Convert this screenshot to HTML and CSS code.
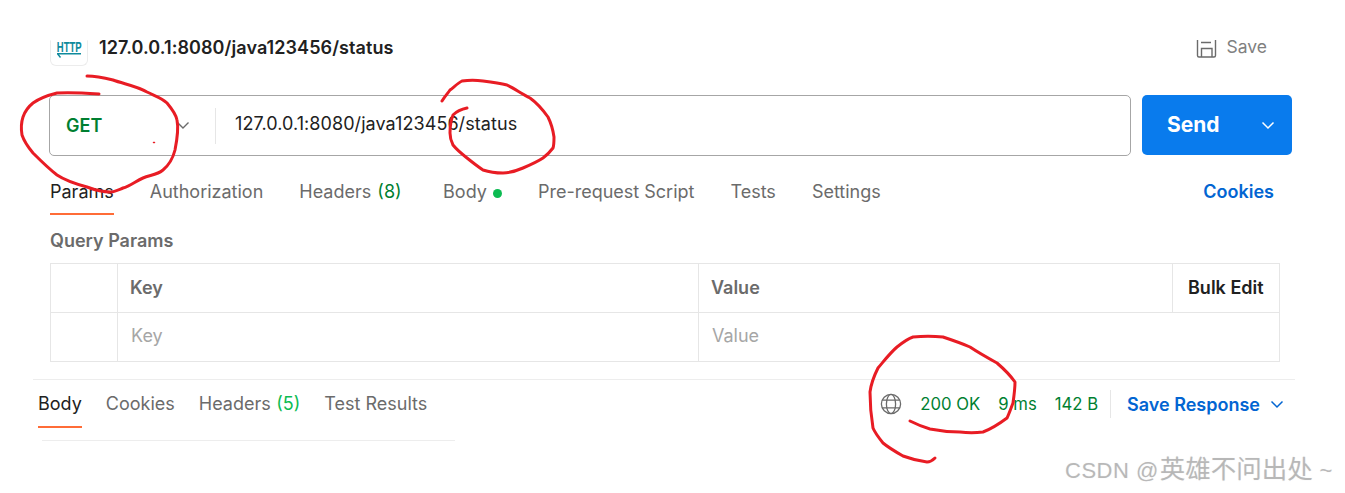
FILE: index.html
```html
<!DOCTYPE html>
<html lang="en">
<head>
<meta charset="utf-8">
<title>Postman request</title>
<link rel="stylesheet" href="styles.css">
</head>
<body>
<div class="page">
  <header class="head">
    <div class="head-left">
      <div class="http-icon"><span class="http-word">HTTP</span><svg class="http-arrow" width="26" height="5" viewBox="0 0 26 5"><path d="M1 .8H25M1.5 .8L4.5 4.5" fill="none" stroke="#0f8a9c" stroke-width="1.4"/></svg></div>
      <div class="title">127.0.0.1:8080/java123456/status</div>
    </div>
    <div class="save">
      <svg class="save-icon" width="21" height="18" viewBox="0 0 21 18"><path d="M1.5 0V15.5Q1.5 17 3 17H18Q19.5 17 19.5 15.5V0M5 2.5H15M5.5 17V8.5H16V17" fill="none" stroke="#6b6b6b" stroke-width="1.4"/></svg>
      <span>Save</span>
    </div>
  </header>

  <div class="bar">
    <div class="url-box">
      <div class="method"><span class="method-name">GET</span><svg class="chev" width="14" height="9" viewBox="0 0 14 9"><path d="M1.5 1.5L7 7L12.5 1.5" fill="none" stroke="#6b6b6b" stroke-width="1.4"/></svg></div>
      <div class="url">127.0.0.1:8080/java123456/status</div>
    </div>
    <div class="send"><span class="send-label">Send</span><svg width="14" height="9" viewBox="0 0 14 9"><path d="M1.5 1.5L7 7L12.5 1.5" fill="none" stroke="#fff" stroke-width="1.5"/></svg></div>
  </div>

  <nav class="req-tabs">
    <span class="tab tab-active">Params</span>
    <span class="tab">Authorization</span>
    <span class="tab">Headers <i class="count">(8)</i></span>
    <span class="tab tab-body">Body <b class="dot"></b></span>
    <span class="tab">Pre-request Script</span>
    <span class="tab">Tests</span>
    <span class="tab">Settings</span>
    <span class="cookies">Cookies</span>
  </nav>

  <div class="qp-label">Query Params</div>
  <div class="qp-table">
    <div class="cell"></div>
    <div class="cell cell-h">Key</div>
    <div class="cell cell-h">Value</div>
    <div class="cell cell-bulk">Bulk Edit</div>
    <div class="cell"></div>
    <div class="cell cell-ph">Key</div>
    <div class="cell cell-ph cell-wide">Value</div>
  </div>

  <section class="resp">
    <nav class="resp-tabs">
      <span class="rtab rtab-active">Body</span>
      <span class="rtab">Cookies</span>
      <span class="rtab">Headers <i class="count2">(5)</i></span>
      <span class="rtab">Test Results</span>
    </nav>
    <div class="resp-meta">
      <svg class="globe" width="22" height="22" viewBox="0 0 22 22" fill="none" stroke="#6b6b6b" stroke-width="1.3"><circle cx="11" cy="11" r="9.6"/><ellipse cx="11" cy="11" rx="4.6" ry="9.6"/><path d="M2.4 7.2H19.6M2.4 14.8H19.6"/></svg>
      <span class="stat stat-ok">200 OK</span>
      <span class="stat stat-ms">9 ms</span>
      <span class="stat stat-size">142 B</span>
      <span class="sep"></span>
      <span class="save-resp">Save Response</span>
      <svg width="14" height="9" viewBox="0 0 14 9"><path d="M1.5 1.5L7 7L12.5 1.5" fill="none" stroke="#0265d2" stroke-width="1.5"/></svg>
    </div>
  </section>
  <div class="resp-rule"></div>

  <svg class="ink" width="1345" height="493" viewBox="0 0 1345 493" fill="none" stroke="#e81c24" stroke-width="3" stroke-linecap="round" stroke-linejoin="round">
    <path d="M87 76C96 76 105 78 113 80C124 84 137 86 147 92C155 96 162 98 167 103C172 109 176 114 177 120C179 130 177 140 175 150C173 158 169 165 163 170C157 175 150 175 143 178C136 181 130 186 123 188C118 190 114 192 110 192C102 192 95 190 87 187C76 184 66 181 57 175C48 168 40 160 33 153C28 147 24 141 22 135C21 129 21 123 23 117C25 111 28 107 33 103C40 98 49 95 57 93C70 92 85 93 99 94"/>
    <path d="M442 101C445 96 448 93 450 90C454 87 458 83 462 81C469 80 476 80 483 81C491 82 499 83 507 85C515 89 522 94 530 98C537 103 543 110 548 117C551 123 553 130 554 137C554 141 554 145 553 148C550 152 547 155 543 158C537 162 530 165 523 168C516 171 510 173 503 173C496 173 489 172 483 170C477 166 472 162 467 158C462 154 457 150 453 145C451 141 450 137 450 133C450 127 451 120 453 115C457 111 462 109 467 108"/>
    <path d="M935 458C932 461 930 462 927 462C919 461 911 459 903 456C896 452 889 448 883 443C879 438 875 433 873 428C871 416 870 404 870 392C871 384 874 376 878 368C884 361 890 353 897 347C902 343 907 339 913 337C923 336 933 336 943 337C952 340 961 343 970 347C979 353 988 358 997 363C1004 369 1010 375 1015 382C1015 389 1014 396 1013 403C1011 408 1009 414 1007 418C999 424 991 429 983 432C975 433 968 433 960 432C950 432 940 431 930 429C923 427 916 424 910 421"/>
    <path class="ink-dot" d="M153.5 142.5H154.5"/>
  </svg>
  <div class="mark">CSDN @<span class="mark-zh">英雄不问出处</span> ~</div>
</div>
</body>
</html>
```
FILE: styles.css
```css
* { box-sizing: border-box; }
html, body { margin: 0; padding: 0; background: #fff; }
.page {
  position: relative;
  width: 1345px;
  height: 493px;
  overflow: hidden;
  font-family: Inter, "Liberation Sans", sans-serif;
  font-size: 18px;
  color: #6b6b6b;
}
.head {
  height: 66px;
  padding: 28px 78px 0 50px;
  display: flex;
  justify-content: space-between;
}
.head-left { display: flex; gap: 11px; align-items: flex-start; }
.http-icon {
  width: 38px;
  height: 26px;
  margin-top: 12px;
  overflow: hidden;
  border-radius: 0 0 6px 6px;
  border: 1px solid #ececec;
  border-top-color: #fff;
  display: flex;
  flex-direction: column;
  align-items: center;
  justify-content: flex-end;
  padding-bottom: 7px;
  flex: none;
}
.http-word {
  font-family: "Liberation Sans", sans-serif;
  font-size: 14px;
  font-weight: 700;
  line-height: 12px;
  color: #0f8a9c;
  transform: scaleX(0.68);
}
.http-arrow { display: block; flex: none; }
.title { font-size: 18px; letter-spacing: 0.08px; font-weight: 600; color: #212121; line-height: 39px; }
.save { display: flex; gap: 10px; line-height: 38px; font-size: 17.5px; color: #808080; }
.save-icon { margin-top: 12px; }
.bar {
  margin-top: 29px;
  padding: 0 53px 0 49px;
  display: flex;
  gap: 11px;
}
.url-box {
  flex: 1;
  height: 61px;
  border: 1px solid #a6a6a6;
  border-radius: 5px;
  display: flex;
  align-items: center;
}
.method {
  width: 166px;
  height: 36px;
  padding: 0 25px 0 16px;
  display: flex;
  align-items: center;
  justify-content: space-between;
  border-right: 1px solid #e6e6e6;
}
.method-name { font-size: 18px; font-weight: 600; color: #007f31; }
.url { padding-left: 19px; margin-bottom: 4px; color: #212121; font-size: 18px; letter-spacing: 0.07px; }
.send {
  width: 150px;
  height: 60px;
  background: #097bed;
  border-radius: 5px;
  color: #fff;
  display: flex;
  align-items: center;
  justify-content: space-between;
  padding: 0 17px 0 25px;
}
.send-label { font-size: 21px; font-weight: 700; margin-bottom: 2px; }
.req-tabs {
  margin-top: 13px;
  padding: 0 71px 0 50px;
  height: 46px;
  display: flex;
  align-items: flex-start;
}
.tab {
  line-height: 45px;
  height: 46px;
  margin-right: 36px;
  white-space: nowrap;
}
.tab-active { color: #212121; border-bottom: 2px solid #ff6c37; }
.tab-body { margin-left: 5.5px; }
.count { font-style: normal; color: #007f31; margin-left: 1px; }
.dot { display: inline-block; width: 9px; height: 9px; border-radius: 50%; background: #0cbb52; margin-left: 1px; }
.cookies { margin-left: auto; line-height: 45px; font-weight: 600; color: #0265d2; }
.qp-label { margin-top: 11px; padding-left: 50px; line-height: 30px; font-weight: 600; }
.qp-table {
  margin: 7px 65px 0 50px;
  display: grid;
  grid-template-columns: 67px 581px 474px 1fr;
  grid-auto-rows: 49px;
  height: 99px;
  border: 1px solid #e6e6e6;
}
.cell {
  border-right: 1px solid #e6e6e6;
  padding-left: 12px;
  line-height: 48px;
}
.qp-table .cell:nth-child(-n+4) { border-bottom: 1px solid #e6e6e6; }
.cell-h { font-weight: 600; }
.cell-bulk { border-right: 0; padding-left: 15px; font-weight: 600; color: #212121; }
.cell-ph { color: #a6a6a6; padding-left: 13px; line-height: 46px; }
.cell-wide { grid-column: span 2; border-right: 0; }
.resp {
  margin: 17px 50px 0 33px;
  height: 49px;
  border-top: 1px solid #ededed;
  display: flex;
  justify-content: space-between;
  padding: 0 11px 0 5px;
}
.resp-tabs { display: flex; gap: 24px; }
.rtab { line-height: 47px; height: 48px; white-space: nowrap; }
.rtab-active { color: #212121; border-bottom: 2px solid #ff6c37; }
.count2 { font-style: normal; color: #0cbb52; margin-left: 0.5px; }
.resp-meta { display: flex; align-items: center; height: 48px; }
.globe { margin-right: 18px; }
.stat { font-size: 16.7px; color: #007f31; }
.stat-ok { margin-right: 18px; }
.stat-ms { margin-right: 18px; }
.stat-size { margin-right: 12px; }
.sep { width: 1px; height: 28px; background: #e6e6e6; margin-right: 16px; }
.save-resp { font-weight: 600; color: #0265d2; margin-right: 10px; }
.resp-rule { margin: 12px 890px 0 42px; height: 1px; background: #ededed; }
.ink { position: absolute; left: 0; top: 0; pointer-events: none; }
.ink-dot { stroke-width: 1.5; }
.mark {
  position: absolute;
  left: 1065px;
  top: 454px;
  font-family: "Liberation Sans", "Noto Sans CJK SC", sans-serif;
  font-size: 22px;
  letter-spacing: 0.5px;
  line-height: 30px;
  color: rgba(140, 140, 140, 0.5);
  text-shadow: 0 0 1px rgba(180, 180, 180, 0.4);
  white-space: nowrap;
}
.mark-zh { font-size: 25.5px; letter-spacing: 0; margin-left: 1px; }
```
